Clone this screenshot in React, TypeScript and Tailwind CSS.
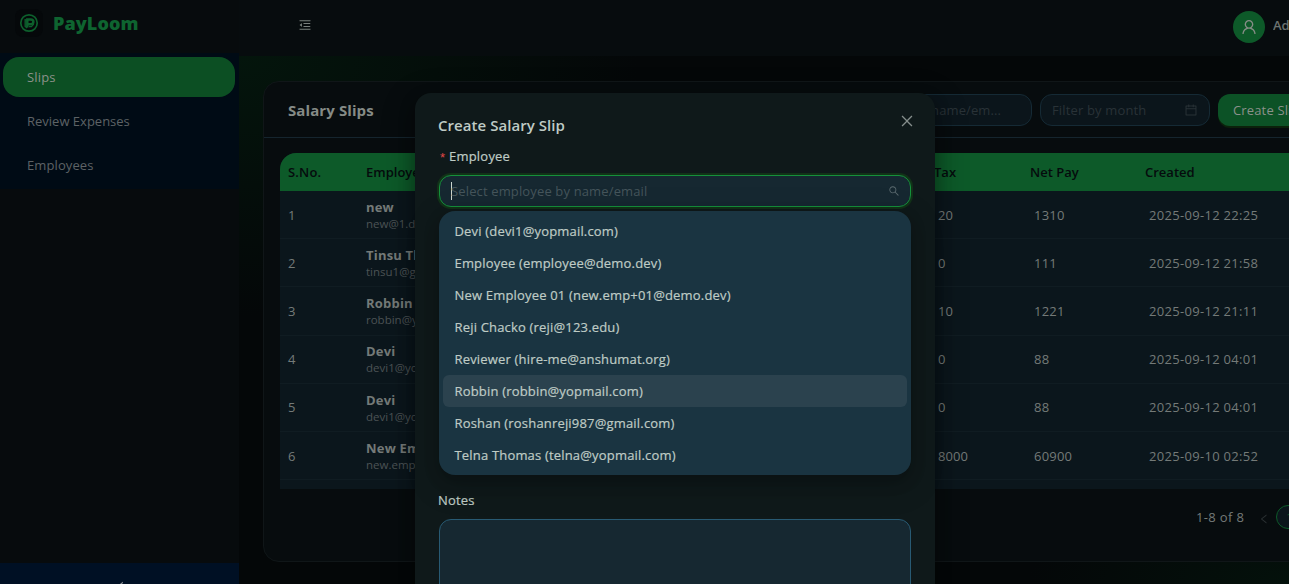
import React from "react";
import {
  AiOutlineCalendar,
  AiOutlineClose,
  AiOutlineLeft,
  AiOutlineMenuFold,
  AiOutlineSearch,
  AiOutlineUser,
} from "react-icons/ai";

const slips = [
  { name: "new", email: "new@1.dev", tax: "20", net: "1310", created: "2025-09-12 22:25" },
  { name: "Tinsu Th", email: "tinsu1@gm", tax: "0", net: "111", created: "2025-09-12 21:58" },
  { name: "Robbin", email: "robbin@yo", tax: "10", net: "1221", created: "2025-09-12 21:11" },
  { name: "Devi", email: "devi1@yop", tax: "0", net: "88", created: "2025-09-12 04:01" },
  { name: "Devi", email: "devi1@yop", tax: "0", net: "88", created: "2025-09-12 04:01" },
  { name: "New Em", email: "new.emp", tax: "8000", net: "60900", created: "2025-09-10 02:52" },
];

const options = [
  "Devi (devi1@yopmail.com)",
  "Employee (employee@demo.dev)",
  "New Employee 01 (new.emp+01@demo.dev)",
  "Reji Chacko (reji@123.edu)",
  "Reviewer (hire-me@anshumat.org)",
  "Robbin (robbin@yopmail.com)",
  "Roshan (roshanreji987@gmail.com)",
  "Telna Thomas (telna@yopmail.com)",
];

function Logo() {
  return (
    <div className="flex size-7 items-center justify-center rounded-lg bg-[#05080a]">
      <svg width="20" height="20" viewBox="0 0 20 20" fill="none" stroke="#0d5f2c">
        <circle cx="10" cy="10" r="8.2" strokeWidth="1.7" />
        <path d="M6.2 6v7.5l2 1.5" strokeWidth="1.4" />
        <path d="M8.3 14.5V6.4h3.6a2.4 2.4 0 0 1 0 4.9H8.5" strokeWidth="2.5" />
        <path d="M10 13.6h2.4l2.4-2.6" strokeWidth="1.2" />
      </svg>
    </div>
  );
}

function Sidebar() {
  return (
    <aside className="flex w-[239px] shrink-0 flex-col bg-[#070b0d]">
      <div className="flex h-[53px] items-center gap-[10px] pb-[7px] pl-[15px]">
        <Logo />
        <span className="text-[18px] font-extrabold tracking-[0.1px] text-[#0e6430]">PayLoom</span>
      </div>
      <nav className="flex h-[136px] flex-col gap-1 bg-[#000b15] pt-1 pr-1 pl-[3px] text-[#5d6265]">
        <div className="flex h-10 items-center rounded-2xl bg-[#0c4f23] pl-6 tracking-[0.15px] text-[#8b9189]">Slips</div>
        <div className="flex h-10 items-center pl-6">Review Expenses</div>
        <div className="flex h-10 items-center pl-6 tracking-[0.1px]">Employees</div>
      </nav>
      <div className="mt-auto flex h-[21px] justify-center overflow-hidden bg-[#001024] pt-[17px]">
        <AiOutlineLeft className="size-[14px] shrink-0 text-[#8a8f94]" />
      </div>
    </aside>
  );
}

function Header() {
  return (
    <header className="flex h-14 shrink-0 items-center bg-[#070c0e] pl-[59px]">
      <AiOutlineMenuFold className="mb-[6px] size-[14px] text-[#7a807e]" />
      <div className="mb-[2px] ml-auto flex items-center gap-2">
        <div className="flex size-8 items-center justify-center rounded-full bg-[#0d5a29]">
          <AiOutlineUser className="size-[18px] text-[#878d87]" />
        </div>
        <span className="mb-[5px] w-4 overflow-hidden font-semibold whitespace-nowrap text-[#6c7370]">Ad</span>
      </div>
    </header>
  );
}

function Row({ index, slip }: { index: number; slip: (typeof slips)[number] }) {
  return (
    <div className="flex h-[48.2px] items-center border-b border-[#101c22] text-[#747a78]">
      <div className="w-[78px] pl-2">{index}</div>
      <div className="w-[568px] pb-[0.6px] pl-2 leading-none">
        <div className="text-[13px] leading-[18px] font-bold tracking-[0.2px]">{slip.name}</div>
        <div className="text-[11.5px] leading-[15px] text-[#4b5355]">{slip.email}</div>
      </div>
      <div className="w-[96px] pl-3 tracking-[0.1px]">{slip.tax}</div>
      <div className="w-[115px] pl-3 tracking-[0.2px]">{slip.net}</div>
      <div className="pl-3 tracking-[0.31px] whitespace-nowrap">{slip.created}</div>
    </div>
  );
}

function SlipsCard() {
  return (
    <section className="flex h-[481px] w-[1041px] flex-col rounded-2xl border border-[#101618] bg-[#070c0e]">
      <div className="flex h-14 shrink-0 items-center border-b border-[#15252e] pl-6">
        <h1 className="w-[569px] shrink-0 text-[15px] font-bold tracking-[0.1px] text-[#858b86]">Salary Slips</h1>
        <div className="flex h-8 w-[175px] shrink-0 items-center justify-end rounded-xl border border-[#152a35] bg-[#0b151b] pr-[30px] text-[#293237]">
          <span className="tracking-[0.1px] whitespace-nowrap">name/em...</span>
        </div>
        <div className="ml-2 flex h-8 w-[170px] shrink-0 items-center justify-between rounded-xl border border-[#152a35] bg-[#0b151b] px-[11px] text-[#293237]">
          <span className="tracking-[0.15px]">Filter by month</span>
          <AiOutlineCalendar className="size-[14px]" />
        </div>
        <button className="ml-2 h-8 w-[105px] shrink-0 rounded-xl bg-[#0c5226] pl-[15px] text-left tracking-[0.15px] whitespace-nowrap text-[#8b918b] shadow-[0_2px_0_#0b210b]">
          Create Slip
        </button>
      </div>
      <div className="mt-[15px] ml-4 h-[336px] shrink-0 overflow-hidden rounded-tl-2xl bg-[#0b161c]">
        <div className="flex h-[38px] items-center bg-[#0d5a29] font-semibold text-[#050b0d]">
          <div className="w-[78px] pl-2 tracking-[0.2px]">S.No.</div>
          <div className="w-[568px] pl-2">Employee</div>
          <div className="w-[96px] pl-2">Tax</div>
          <div className="w-[115px] pl-2">Net Pay</div>
          <div className="pl-2">Created</div>
        </div>
        {slips.map((slip, i) => (
          <Row key={i} index={i + 1} slip={slip} />
        ))}
      </div>
      <div className="mt-4 ml-[932px] flex h-6 items-center whitespace-nowrap text-[#747a78]">
        <span className="w-[49px] tracking-[0.35px]">1-8 of 8</span>
        <AiOutlineLeft className="mt-[3px] mr-[6px] ml-[14px] size-3 shrink-0 text-[#2a3032]" />
        <span className="h-6 w-10 shrink-0 rounded-full border border-[#0d5a29] bg-[#0b151b] pl-[9px] text-[#0d5a29]">1</span>
      </div>
    </section>
  );
}

function SlipModal() {
  return (
    <div className="absolute top-[93px] left-[415px] h-[600px] w-[520px] rounded-2xl bg-[#0f191a] px-6 pt-[21px] text-[#bfcbc5] shadow-[0_6px_16px_rgba(0,0,0,0.3),0_9px_28px_8px_rgba(0,0,0,0.2)]">
      <div className="flex h-[22px] items-center justify-between">
        <h2 className="-ml-px text-[15px] font-semibold tracking-[0.05px]">Create Salary Slip</h2>
        <AiOutlineClose className="mt-[-8px] mr-[-4px] size-4 text-[#858e8c]" />
      </div>
      <div className="mt-[9px] flex h-[22px] items-center gap-[4px] pl-px">
        <span className="pt-[3px] font-['Liberation_Sans',sans-serif] text-[13px] text-[#e04848]">*</span>
        <span className="tracking-[0.2px] [-webkit-text-stroke:0.2px]">Employee</span>
      </div>
      <div className="relative mt-2">
        <div className="flex h-8 w-[472px] items-center rounded-xl border border-[#15913b] bg-[#162831] pr-[10px] pl-[11px] text-[#45555b] shadow-[0_0_0_2px_#123218]">
          <span className="h-[18px] w-px bg-[#cad5d0]" />
          <span className="-ml-px tracking-[0.14px]">Select employee by name/email</span>
          <AiOutlineSearch className="ml-auto size-3 text-[#5b6a6f]" />
        </div>
        <div className="absolute top-9 left-0 h-[264px] w-[472px] rounded-2xl bg-[#1a3441] p-1 tracking-[0.18px] shadow-[0_6px_16px_rgba(0,0,0,0.2),0_9px_28px_8px_rgba(0,0,0,0.12)] [-webkit-text-stroke:0.2px]">
          {options.map((label) => (
            <div
              key={label}
              className={
                label.startsWith("Robbin")
                  ? "flex h-8 items-center rounded-md bg-[#2b424e] px-[11.5px]"
                  : "flex h-8 items-center rounded-md px-[11.5px]"
              }
            >
              {label}
            </div>
          ))}
        </div>
      </div>
      <div className="mt-[282px] -ml-px flex h-[22px] items-center tracking-[0.2px] [-webkit-text-stroke:0.2px]">Notes</div>
      <div className="mt-2 h-[90px] rounded-xl border border-[#285a73] bg-[#162831]" />
    </div>
  );
}

export default function App() {
  return (
    <div className="relative flex h-[584px] w-full overflow-hidden bg-[#040708] font-['Open_Sans','Noto_Sans',sans-serif] text-[13px] leading-[22px]">
      <Sidebar />
      <main className="flex min-w-0 flex-1 flex-col">
        <Header />
        <div className="flex-1 bg-[radial-gradient(ellipse_400px_260px_at_0%_0%,#04150c_0%,#04070800_100%),radial-gradient(ellipse_260px_120px_at_100%_100%,#04110b_0%,#04070800_100%)] pt-[25px] pl-6">
          <SlipsCard />
        </div>
      </main>
      <SlipModal />
    </div>
  );
}
